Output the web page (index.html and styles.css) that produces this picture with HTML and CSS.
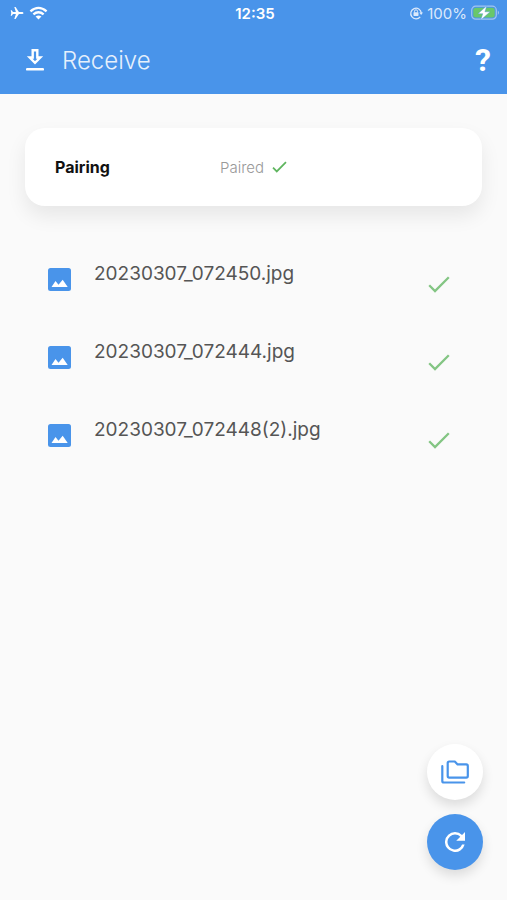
FILE: index.html
```html
<!DOCTYPE html>
<html lang="en">
<head>
<meta charset="utf-8">
<meta name="viewport" content="width=device-width, initial-scale=1">
<title>Receive</title>
<link rel="stylesheet" href="styles.css">
</head>
<body>
<header class="top">
  <div class="status">
    <div class="status-left">
      <svg class="plane" viewBox="0 0 14 14" aria-hidden="true"><path d="M13.5 7c0-.7-.8-1.1-1.700-1.100H8.900L5.600 1H4.300l1.600 4.900H3L1.700 4.200H.7L1.300 7 .7 9.800h1L3 8.100h2.900L4.300 13h1.300l3.300-4.900h2.900c.9 0 1.700-.4 1.700-1.100z" fill="currentColor"/></svg>
      <svg class="wifi" viewBox="0 0 20 14" aria-hidden="true"><g fill="none" stroke="currentColor" stroke-width="2.500"><path d="M1.500 5.200Q10-2 18.500 5.200"/><path d="M4.600 8.500Q10 4 15.400 8.500"/></g><path d="M6.900 10.800Q10 8.300 13.100 10.800L10 13.900z" fill="currentColor"/></svg>
    </div>
    <span class="clock">12:35</span>
    <div class="status-right">
      <svg class="lock" viewBox="0 0 14 14" aria-hidden="true"><path d="M11.200 10.800A5.300 5.300 0 1 1 12.300 7" fill="none" stroke="currentColor" stroke-width="1.300"/><path d="M10.300 6.500h3.700l-1.900 2.500z" fill="currentColor"/><rect x="4.500" y="6.200" width="5" height="3.700" rx=".6" fill="currentColor"/><path d="M5.500 6.500V5.300a1.500 1.500 0 0 1 3 0v1.200" fill="none" stroke="currentColor"/></svg>
      <span>100%</span>
      <svg class="battery" viewBox="0 0 29 16" aria-hidden="true"><rect x=".7" y="1.200" width="24.600" height="13" rx="4" fill="none" stroke="#a3c5ef" stroke-width="1.200"/><rect x="2.300" y="2.800" width="21.400" height="9.800" rx="2.500" fill="#69c76b"/><path d="M26.800 5.500q2.400 2.200 0 4.400z" fill="#a3c5ef"/><path d="M15.800.8 7 8.700h4.800L9.700 15l9.400-8.200h-5.200z" fill="#fff" stroke="#4994ea" stroke-width=".4"/></svg>
    </div>
  </div>
  <div class="bar">
    <svg class="download" viewBox="0 0 18 22" aria-hidden="true"><path d="M6.700 1.300h4.600v7.200h3L9 13.800 3.700 8.500h3z" fill="none" stroke="currentColor" stroke-width="2.400"/><path d="M1.200 20.300h15.600" stroke="currentColor" stroke-width="2.600" stroke-linecap="round"/></svg>
    <h1>Receive</h1>
    <button class="help" type="button" aria-label="Help">?</button>
  </div>
</header>
<main>
  <section class="card">
    <h2>Pairing</h2>
    <p class="state">Paired
      <svg class="tick-small" viewBox="0 0 22 17" aria-hidden="true"><path d="M1.500 9.500 7 15 20.500 1.500" fill="none" stroke="currentColor" stroke-width="2.600"/></svg>
    </p>
  </section>
  <ul class="files">
    <li>
      <svg class="image" viewBox="0 0 23 23" aria-hidden="true"><rect width="23" height="23" rx="2.500" fill="#4994ea"/><path d="M3.500 19 7.500 13l3 3.700L14.700 11.800 19.700 19z" fill="#fff"/></svg>
      <span class="name">20230307_072450.jpg</span>
      <svg class="tick" viewBox="0 0 22 17" aria-hidden="true"><path d="M1.200 9.200 7 15 20.800 1.200" fill="none" stroke="currentColor" stroke-width="2.300"/></svg>
    </li>
    <li>
      <svg class="image" viewBox="0 0 23 23" aria-hidden="true"><rect width="23" height="23" rx="2.500" fill="#4994ea"/><path d="M3.500 19 7.500 13l3 3.700L14.700 11.800 19.700 19z" fill="#fff"/></svg>
      <span class="name">20230307_072444.jpg</span>
      <svg class="tick" viewBox="0 0 22 17" aria-hidden="true"><path d="M1.200 9.200 7 15 20.800 1.200" fill="none" stroke="currentColor" stroke-width="2.300"/></svg>
    </li>
    <li>
      <svg class="image" viewBox="0 0 23 23" aria-hidden="true"><rect width="23" height="23" rx="2.500" fill="#4994ea"/><path d="M3.500 19 7.500 13l3 3.700L14.700 11.800 19.700 19z" fill="#fff"/></svg>
      <span class="name">20230307_072448(2).jpg</span>
      <svg class="tick" viewBox="0 0 22 17" aria-hidden="true"><path d="M1.200 9.200 7 15 20.800 1.200" fill="none" stroke="currentColor" stroke-width="2.300"/></svg>
    </li>
  </ul>
</main>
<div class="actions">
  <button class="fab" type="button" aria-label="Open folder">
    <svg class="folders" viewBox="0 0 28 24" aria-hidden="true"><g fill="none" stroke="currentColor" stroke-width="2.200" stroke-linejoin="round" stroke-linecap="round"><path d="M8.200 1.500h5.600l2.800 2.900h8.700q1.500 0 1.500 1.500v10.200q0 1.500-1.500 1.500H8.200q-1.500 0-1.500-1.500V3q0-1.500 1.500-1.500z"/><path d="M1.300 6.200v14.800q0 1.500 1.500 1.500h20.400"/></g></svg>
  </button>
  <button class="fab primary" type="button" aria-label="Refresh">
    <svg class="refresh" viewBox="4 4 16 16" aria-hidden="true"><path d="M17.650 6.350A7.960 7.960 0 0 0 12 4a8 8 0 1 0 7.730 10h-2.080A6 6 0 1 1 12 6c1.660 0 3.140.69 4.220 1.780L13 11h7V4z" fill="currentColor"/></svg>
  </button>
</div>
</body>
</html>
```

FILE: styles.css
```css
* { box-sizing: border-box; }

body {
  margin: 0;
  min-height: 100vh;
  display: flex;
  flex-direction: column;
  background: #fafafa;
  color: #111;
  font-family: Inter, "Liberation Sans", sans-serif;
}

svg { display: block; flex: none; }
h1, h2, p, ul { margin: 0; padding: 0; }
button { border: 0; padding: 0; font: inherit; cursor: pointer; }

.top { background: #4994ea; color: #fff; }

.status {
  display: grid;
  grid-template-columns: 1fr auto 1fr;
  align-items: center;
  height: 26px;
  padding: 0 7px 0 10px;
  font-size: 15px;
}
.status-left, .status-right { display: flex; align-items: center; }
.status-left { gap: 5px; }
.status-right { justify-content: flex-end; gap: 4px; color: #dce9fb; }
.clock { font-weight: 600; }
.plane { width: 14px; height: 14px; }
.wifi { width: 19px; height: 14px; }
.lock { width: 14px; height: 14px; }
.battery { width: 29px; height: 16px; }

.bar {
  display: flex;
  align-items: center;
  height: 68px;
  padding: 0 16px 0 26px;
}
.download { width: 18px; height: 22px; }
h1 { flex: 1; margin-left: 18px; font-size: 24px; font-weight: 300; color: #e6f0fc; }
.help { background: none; color: #fff; font-family: Roboto, sans-serif; font-size: 32px; line-height: 32px; font-weight: 700; }

main { flex: 1; padding: 34px 25px; }

.card {
  display: grid;
  grid-template-columns: 165px 1fr;
  align-items: center;
  min-height: 78px;
  padding: 0 30px;
  border-radius: 20px;
  background: #fff;
  box-shadow: 0 10px 20px rgba(0, 0, 0, 0.08);
}
h2 { font-size: 16px; font-weight: 700; }
.state { display: flex; align-items: center; gap: 8px; color: #999; font-size: 15px; font-weight: 300; }
.tick-small { width: 15px; height: 12px; color: #5fb55f; }

.files { margin-top: 34px; list-style: none; }
.files li { display: flex; align-items: center; height: 78px; padding: 0 32px 0 23px; }
.image { width: 23px; height: 23px; }
.name { flex: 1; margin-left: 23px; padding-bottom: 12px; color: #555; font-size: 19px; font-weight: 400; }
.tick { width: 22px; height: 17px; margin-top: 10px; color: #83c583; }

.actions {
  position: fixed;
  right: 24px;
  bottom: 30px;
  display: grid;
  gap: 14px;
}
.fab {
  display: grid;
  place-items: center;
  width: 56px;
  height: 56px;
  border-radius: 50%;
  background: #fff;
  color: #4994ea;
  box-shadow: 0 6px 12px rgba(0, 0, 0, 0.12);
}
.primary { background: #4994ea; color: #fff; }
.folders { width: 28px; height: 24px; }
.refresh { width: 20px; height: 20px; }
```
